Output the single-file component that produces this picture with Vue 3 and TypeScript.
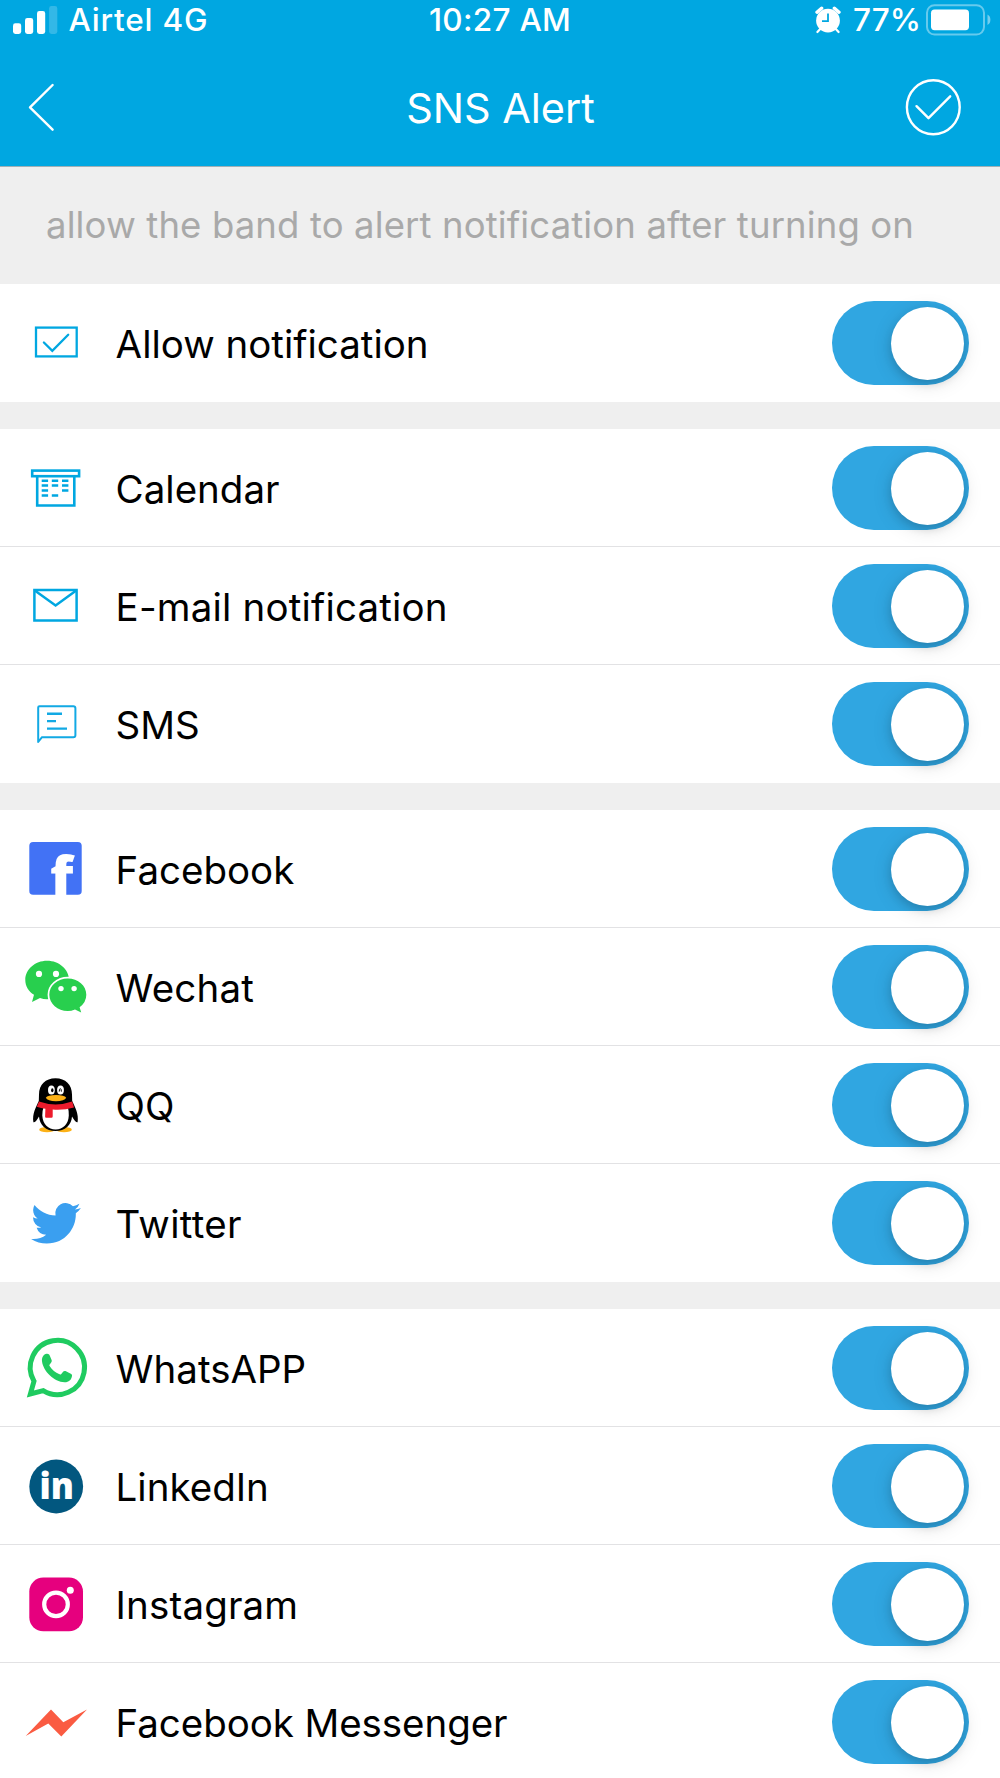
<script setup lang="ts">
import { reactive } from 'vue'

interface Item {
  id: string
  label: string
  on: boolean
}

const groups = reactive<Item[][]>([
  [{ id: 'allow', label: 'Allow notification', on: true }],
  [
    { id: 'calendar', label: 'Calendar', on: true },
    { id: 'email', label: 'E-mail notification', on: true },
    { id: 'sms', label: 'SMS', on: true },
  ],
  [
    { id: 'facebook', label: 'Facebook', on: true },
    { id: 'wechat', label: 'Wechat', on: true },
    { id: 'qq', label: 'QQ', on: true },
    { id: 'twitter', label: 'Twitter', on: true },
  ],
  [
    { id: 'whatsapp', label: 'WhatsAPP', on: true },
    { id: 'linkedin', label: 'LinkedIn', on: true },
    { id: 'instagram', label: 'Instagram', on: true },
    { id: 'messenger', label: 'Facebook Messenger', on: true },
  ],
])
</script>

<template>
  <div class="screen">
    <header class="top">
      <div class="status">
        <div class="side left">
          <svg class="signal" width="45" height="28" viewBox="0 0 45 28" fill="#fff">
            <rect x="0" y="17.3" width="8.2" height="10.7" rx="2.4" />
            <rect x="12" y="12" width="8.2" height="16" rx="2.4" />
            <rect x="24" y="5" width="8.2" height="23" rx="2.4" />
            <rect x="36.1" y="0" width="8.2" height="28" rx="2.4" opacity=".2" />
          </svg>
          <span class="carrier">Airtel 4G</span>
        </div>
        <span class="time">10:27 AM</span>
        <div class="side right">
          <svg class="alarm" width="26" height="28" viewBox="0 0 26 28">
            <circle cx="13" cy="14.6" r="11.9" fill="#fff" />
            <path d="M2 6.2L6.6 2.2M24 6.2L19.4 2.2" stroke="#fff" stroke-width="3.4" stroke-linecap="round" />
            <path d="M5.2 23L2.4 26M20.8 23L23.6 26" stroke="#fff" stroke-width="2.2" stroke-linecap="round" />
            <path d="M13 7.4V15.2H7" stroke="#00a7e1" stroke-width="1.8" fill="none" />
          </svg>
          <span class="percent">77%</span>
          <svg class="battery" width="66" height="32" viewBox="0 0 66 32">
            <rect x="1" y="1.2" width="57" height="29.4" rx="7.5" fill="none" stroke="#fff" stroke-opacity=".4" stroke-width="2" />
            <rect x="5" y="5.6" width="38" height="20.6" rx="3.6" fill="#fff" />
            <path d="M61.5 10.5Q64.4 12 64.4 15.8T61.5 21Z" fill="#fff" fill-opacity=".45" />
          </svg>
        </div>
      </div>
      <div class="nav">
        <svg class="back" width="30" height="60" viewBox="0 0 30 60" fill="none" stroke="#fff" stroke-width="2.4" stroke-linecap="round" stroke-linejoin="round">
          <path d="M24.6 8L2 30.4L24.6 52.7" />
        </svg>
        <h1>SNS Alert</h1>
        <svg class="done" width="60" height="60" viewBox="0 0 60 60" fill="none" stroke="#fff" stroke-width="2.4" stroke-linecap="round" stroke-linejoin="round">
          <ellipse cx="30.3" cy="30.3" rx="26.4" ry="27" />
          <path d="M13.5 29.2L25.5 41.2L47.2 19.3" />
        </svg>
      </div>
    </header>

    <p class="hint">allow the band to alert notification after turning on</p>

    <main>
      <section v-for="(group, g) in groups" :key="g" class="group">
        <div v-for="item in group" :key="item.id" class="row">
          <svg class="icon" width="66" height="64" viewBox="0 0 66 64">
            <g v-if="item.id === 'allow'" fill="none" stroke="#00a7e1" stroke-width="2.3">
              <rect x="13" y="16.6" width="40.7" height="28.8" />
              <path d="M20.9 31.5L29.3 39.9L45.2 23.7" stroke-linecap="round" />
            </g>
            <g v-else-if="item.id === 'calendar'" fill="none" stroke="#00a7e1" stroke-width="2.6">
              <rect x="9.2" y="14.6" width="46.9" height="5.6" />
              <path d="M14.2 20.2V49.5H51.3V20.2" />
              <path d="M18.7 24.7h6.4M28.8 24.7h6.4M39 24.7h6.4M18.7 29.5h6.4M28.8 29.5h6.4M39 29.5h6.4M18.7 34.5h6.4M39 34.5h6.4M18.7 39.5h6.4M28.8 39.5h6.4" />
            </g>
            <g v-else-if="item.id === 'email'" fill="none" stroke="#00a7e1" stroke-width="2.5">
              <rect x="11.4" y="16" width="42.2" height="30.5" />
              <path d="M11.8 16.5L32.6 31.4L53.2 16.5" />
            </g>
            <g v-else-if="item.id === 'sms'" fill="none" stroke="#12a9e4" stroke-width="2" stroke-linejoin="round">
              <path d="M15.2 50V15.5Q15.2 14.2 16.5 14.2H50.3Q52.4 14.2 52.4 16.3V43.2Q52.4 45.2 50.3 45.2H19Z" />
              <path d="M24 21.7H39M24 29.1H33M24 36.6H44" stroke-width="2.4" />
            </g>
            <g v-else-if="item.id === 'facebook'">
              <rect x="6.3" y="5" width="52.4" height="52.7" rx="3.8" fill="#4272f5" />
              <text transform="translate(26.9 57.7) scale(1.07 1)" font-family="Open Sans" font-size="53" font-weight="800" fill="#fff">f</text>
            </g>
            <g v-else-if="item.id === 'wechat'" fill="#28cf4e">
              <path d="M24.1 5.8C36.2 5.8 46 14.4 46 25S36.2 44.2 24.1 44.2Q20.3 44.2 17 43L9 47L11 39.8C5.6 36.6 2.3 31.2 2.3 25C2.3 14.4 12 5.8 24.1 5.8Z" />
              <path d="M44.8 23.5C55 23.5 63.3 30.7 63.3 39.7Q63.3 47.2 56.6 52.2L58.2 57.5L52 54.4Q48.3 56 44.8 56C34.6 56 26.3 48.7 26.3 39.7S34.6 23.5 44.8 23.5Z" stroke="#fff" stroke-width="3.4" paint-order="stroke" />
              <g fill="#fff">
                <circle cx="16" cy="18.9" r="3.1" />
                <circle cx="33" cy="18.9" r="3.1" />
                <circle cx="38" cy="33.6" r="2.7" />
                <circle cx="51.1" cy="33.6" r="2.7" />
              </g>
            </g>
            <g v-else-if="item.id === 'qq'">
              <ellipse cx="24" cy="56.7" rx="7.8" ry="2.6" fill="#fcb116" />
              <ellipse cx="41" cy="56.7" rx="7.8" ry="2.6" fill="#fcb116" />
              <path d="M32.5 5.2C42.5 5.2 49 11.5 49 21.5L49.2 28C52 34 56 41 54.6 49.3Q52.8 50 49 43.5C48.6 52 42 58 32.5 58S16.5 52 16 43.5Q12.3 50 10.4 49.3C9 41 13 34 15.8 28L16 21.5C16 11.5 22.5 5.2 32.5 5.2Z" />
              <path d="M20.6 34H44.8Q46 38 45.8 42.5C45.4 51.5 40 56.4 32.6 56.4S19.8 51.5 19.3 42.5Q19.2 38 20.6 34Z" fill="#fff" />
              <path d="M16 28.6Q32.5 34.4 49.2 28.6L51 34.4Q40 37.4 29.7 36.4V43.5Q29.7 44.7 28.5 44.7H23.2Q22 44.7 22.1 43.5L22.4 35.8Q18 35.2 13.8 33.8Z" fill="#ed1b2c" />
              <ellipse cx="28.4" cy="17" rx="3.4" ry="4.6" fill="#fff" />
              <ellipse cx="37.5" cy="17" rx="3.4" ry="4.6" fill="#fff" />
              <ellipse cx="29.3" cy="17.2" rx="1.2" ry="2" />
              <path d="M36.2 18.6Q36.4 15.6 37.3 15.6T38.4 18.6" fill="none" stroke="#000" stroke-width="1" />
              <path d="M22.8 24.8Q24.5 22 33 22T43.2 24.8Q41.5 28.2 33 28.2T22.8 24.8Z" fill="#fcb116" />
            </g>
            <g v-else-if="item.id === 'twitter'" fill="#3a9ff0" transform="translate(8.1 7.4) scale(2.075)">
              <path d="M23.953 4.57a10 10 0 01-2.825.775 4.958 4.958 0 002.163-2.723c-.951.555-2.005.959-3.127 1.184a4.92 4.92 0 00-8.384 4.482C7.69 8.095 4.067 6.13 1.64 3.162a4.822 4.822 0 00-.666 2.475c0 1.71.87 3.213 2.188 4.096a4.904 4.904 0 01-2.228-.616v.06a4.923 4.923 0 003.946 4.827 4.996 4.996 0 01-2.212.085 4.936 4.936 0 004.604 3.417 9.867 9.867 0 01-6.102 2.105c-.39 0-.779-.023-1.17-.067a13.995 13.995 0 007.557 2.209c9.053 0 13.998-7.496 13.998-13.985 0-.21 0-.42-.015-.63A9.935 9.935 0 0024 4.59z" />
            </g>
            <g v-else-if="item.id === 'whatsapp'" fill="#1fcb60">
              <path d="M11 45.2A27.1 27.1 0 1 1 20.2 54.6L7.4 57.9Z" fill="none" stroke="#1fcb60" stroke-width="5" />
              <path d="M19 25.2C18.6 21.4 20.6 18.2 23.6 17.8C25.3 17.6 26.2 18.3 26.8 19.7L28.5 23.8C29 25 28.8 25.8 28 26.8L26.7 28.4C26.2 29 26.2 29.5 26.6 30.1C29.2 34 32.2 36.5 36.5 38.3C37.3 38.6 37.8 38.5 38.3 37.9L40.3 35.6C41 34.9 41.6 34.7 42.5 35.1L47.8 37.7C48.9 38.3 49.2 38.8 49 40C48.5 43.8 45.6 46.4 41.6 46.3C31 45.6 20.2 35.2 19 25.2Z" />
            </g>
            <g v-else-if="item.id === 'linkedin'">
              <circle cx="33.2" cy="32.5" r="26.9" fill="#02577f" />
              <text x="16.6" y="45.3" font-family="Open Sans" font-size="36.5" font-weight="800" fill="#fff" textLength="34.4" lengthAdjust="spacingAndGlyphs">in</text>
            </g>
            <g v-else-if="item.id === 'instagram'">
              <rect x="6.3" y="5.6" width="53.7" height="53.7" rx="14" fill="#e6007e" />
              <circle cx="33" cy="32.4" r="11.8" fill="none" stroke="#fff" stroke-width="4.2" />
              <circle cx="47.3" cy="18.3" r="3.5" fill="#fff" />
            </g>
            <path v-else d="M2.7 46.1L28 19.4L40.3 32.3L64 19.4L38.3 46.4L25.3 33.5Z" fill="#fa5b42" />
          </svg>
          <span class="label" :class="item.id">{{ item.label }}</span>
          <button class="switch" :class="{ on: item.on }" role="switch" :aria-checked="item.on" :aria-label="item.label" @click="item.on = !item.on">
            <span class="knob" />
          </button>
        </div>
      </section>
    </main>
  </div>
</template>

<style>
body {
  margin: 0;
  background: #efefef;
}
</style>

<style scoped>
.screen {
  width: 1000px;
  height: 1778px;
  overflow: hidden;
  background: #efefef;
  font-family: Inter, 'Liberation Sans', sans-serif;
  color: #000;
}
.top {
  box-sizing: border-box;
  height: 167px;
  background: #00a7e1;
  border-bottom: 1px solid #9fb0b6;
  color: #fff;
}
.status {
  display: flex;
  align-items: center;
  height: 40px;
  padding: 0 8px 0 13px;
  font-size: 31.5px;
  font-weight: 500;
  line-height: 40px;
}
.side {
  display: flex;
  align-items: center;
  flex: 1 1 0;
}
.right {
  justify-content: flex-end;
}
.carrier {
  margin-left: 10.5px;
  letter-spacing: 0.8px;
}
.time {
  margin-right: 5px;
  letter-spacing: 0.3px;
}
.percent {
  margin: 0 5px 0 12px;
}
.nav {
  display: flex;
  align-items: center;
  height: 126px;
  padding: 7px 37px 0 28px;
  box-sizing: border-box;
}
.nav h1 {
  flex: 1;
  margin: 2px 0 0 40px;
  text-align: center;
  font-size: 41.5px;
  font-weight: 400;
  letter-spacing: -0.05px;
  line-height: 60px;
}
.hint {
  box-sizing: border-box;
  height: 117px;
  margin: 0;
  padding-left: 46px;
  font-size: 36.5px;
  line-height: 117px;
  letter-spacing: 0.13px;
  color: #a9a9a9;
  white-space: nowrap;
}
.group + .group {
  margin-top: 27px;
}
.row {
  box-sizing: border-box;
  display: flex;
  align-items: center;
  height: 118px;
  padding: 0 31.2px 0 23px;
  background: #fff;
}
.row:not(:last-child) {
  box-shadow: inset 0 -1px #e2e2e4;
}
.icon {
  flex: none;
  overflow: visible;
}
.label {
  flex: 1;
  margin: 1px 0 0 26.6px;
  font-size: 38.5px;
  line-height: 60px;
  white-space: nowrap;
}
.email {
  letter-spacing: 0.18px;
}
.twitter {
  letter-spacing: 0.3px;
}
.instagram,
.wechat {
  letter-spacing: 0.15px;
}
.messenger {
  letter-spacing: -0.07px;
}
.switch {
  box-sizing: border-box;
  flex: none;
  display: flex;
  justify-content: flex-start;
  width: 137px;
  height: 83.6px;
  padding: 5.3px 5px;
  border: 0;
  border-radius: 42px;
  background: #d8d8d8;
}
.switch.on {
  justify-content: flex-end;
  background: #30a6e1;
}
.knob {
  width: 73px;
  height: 73px;
  border-radius: 50%;
  background: #fff;
  box-shadow: 0 4px 20px rgba(0, 0, 0, 0.13), 0 4px 8px rgba(0, 0, 0, 0.13);
}
</style>
